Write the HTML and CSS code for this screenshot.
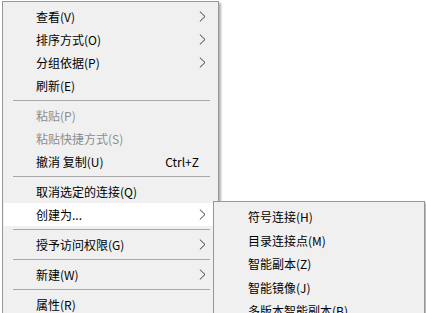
FILE: index.html
```html
<!DOCTYPE html>
<html lang="zh-CN">
<head>
<meta charset="utf-8">
<link rel="stylesheet" href="styles.css">
</head>
<body>
<div class="desk">
  <div class="menu main">
    <div class="item"><span class="label">查看(V)</span><svg class="chev" width="7" height="11" viewBox="0 0 7 11"><polyline points="0.8,0.5 6,5.5 0.8,10.5"/></svg></div>
    <div class="item"><span class="label">排序方式(O)</span><svg class="chev" width="7" height="11" viewBox="0 0 7 11"><polyline points="0.8,0.5 6,5.5 0.8,10.5"/></svg></div>
    <div class="item"><span class="label">分组依据(P)</span><svg class="chev" width="7" height="11" viewBox="0 0 7 11"><polyline points="0.8,0.5 6,5.5 0.8,10.5"/></svg></div>
    <div class="item"><span class="label">刷新(E)</span></div>
    <div class="sep"></div>
    <div class="item disabled"><span class="label">粘贴(P)</span></div>
    <div class="item disabled"><span class="label">粘贴快捷方式(S)</span></div>
    <div class="item"><span class="label">撤消 复制(U)</span><span class="accel">Ctrl+Z</span></div>
    <div class="sep"></div>
    <div class="item"><span class="label">取消选定的连接(Q)</span></div>
    <div class="item active"><span class="label">创建为...</span><svg class="chev" width="7" height="11" viewBox="0 0 7 11"><polyline points="0.8,0.5 6,5.5 0.8,10.5"/></svg></div>
    <div class="sep"></div>
    <div class="item"><span class="label">授予访问权限(G)</span><svg class="chev" width="7" height="11" viewBox="0 0 7 11"><polyline points="0.8,0.5 6,5.5 0.8,10.5"/></svg></div>
    <div class="sep"></div>
    <div class="item"><span class="label">新建(W)</span><svg class="chev" width="7" height="11" viewBox="0 0 7 11"><polyline points="0.8,0.5 6,5.5 0.8,10.5"/></svg></div>
    <div class="sep"></div>
    <div class="item"><span class="label">属性(R)</span></div>
  </div>
  <div class="menu sub">
    <div class="sitem">符号连接(H)</div>
    <div class="sitem">目录连接点(M)</div>
    <div class="sitem">智能副本(Z)</div>
    <div class="sitem">智能镜像(J)</div>
    <div class="sitem">多版本智能副本(B)</div>
  </div>
</div>
</body>
</html>
```

FILE: styles.css
```css
html, body {
  margin: 0;
  padding: 0;
  background: #ffffff;
  width: 426px;
  height: 313px;
  overflow: hidden;
}
.desk {
  position: relative;
  width: 426px;
  height: 313px;
  overflow: hidden;
  font-family: "Noto Sans CJK SC", "Noto Sans", sans-serif;
  font-size: 12px;
  color: #000;
}
.menu {
  box-sizing: border-box;
  background: #f0f0f0;
  border: 1px solid #979797;
  box-shadow: 2px 2px 2px rgba(0, 0, 0, 0.3);
}
.main {
  margin: 1px 0 0 2px;
  width: 217px;
  padding: 3px 2px 20px 1px;
}
.item {
  display: flex;
  align-items: center;
  height: 23px;
  padding: 0 10px 0 32px;
  line-height: 23px;
}
.item .label {
  flex: 1;
  white-space: nowrap;
}
.item.active {
  background: #ffffff;
}
.item.disabled {
  color: #8d8d8d;
}
.chev {
  display: block;
  fill: none;
  stroke: #3c3c3c;
  stroke-width: 1;
}
.accel {
  margin-right: 7px;
}
.sep {
  height: 7px;
  display: flex;
  align-items: center;
  padding: 0 6px 0 9px;
}
.sep::before {
  content: "";
  display: block;
  flex: 1;
  height: 1px;
  background: #a8a8a8;
}
.sub {
  position: absolute;
  left: 213px;
  top: 201px;
  width: 212px;
  height: 140px;
  padding: 3px 2px;
}
.sitem {
  height: 23.5px;
  line-height: 23.5px;
  padding-left: 32px;
  white-space: nowrap;
}
```
